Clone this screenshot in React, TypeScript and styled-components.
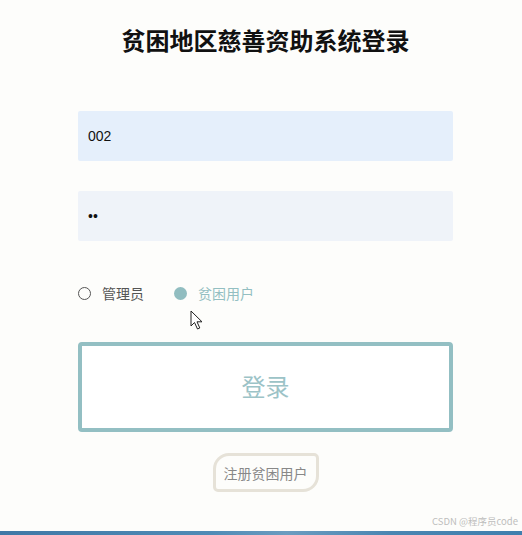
import React, { useState } from "react";
import styled, { createGlobalStyle } from "styled-components";

const GlobalStyle = createGlobalStyle`
    html, body {
        margin: 0;
        padding: 0;
        background: #fdfdfb;
        font-family: "Microsoft YaHei", "Noto Sans CJK SC", "Liberation Sans", sans-serif;
    }
`
const Page = styled.div`
    position: relative;
    width: 522px;
    height: 535px;
    overflow: hidden;
    display: flex;
    flex-direction: column;
`
const Title = styled.h1`
    margin: 25px 0 0 0;
    padding-left: 9px;
    text-align: center;
    font-size: 24px;
    font-weight: 700;
    line-height: 30px;
    color: #111;
`
const Form = styled.div`
    display: flex;
    flex-direction: column;
    width: 375px;
    margin: 56px 0 0 78px;
`
const Input = styled.input<{ $bg: string }>`
    box-sizing: border-box;
    width: 100%;
    height: 50px;
    border: none;
    outline: none;
    border-radius: 2px;
    padding: 0 10px;
    background: ${p => p.$bg};
    font-family: "Liberation Sans", Arial, sans-serif;
    font-size: 14px;
    color: #111;
    & + & {
        margin-top: 30px;
    }
`
const RadioRow = styled.div`
    display: flex;
    align-items: center;
    gap: 30px;
    margin-top: 40px;
    height: 24px;
`
const RadioItem = styled.label<{ $active?: boolean }>`
    display: flex;
    align-items: center;
    gap: 11px;
    font-size: 14px;
    color: ${p => (p.$active ? "#93bfc2" : "#555")};
    cursor: pointer;
`
const Dot = styled.span<{ $active?: boolean }>`
    box-sizing: border-box;
    width: 13px;
    height: 13px;
    border-radius: 50%;
    border: ${p => (p.$active ? "none" : "1px solid #555")};
    background: ${p => (p.$active ? "#91bdc0" : "transparent")};
`
const LoginButton = styled.button`
    box-sizing: border-box;
    margin-top: 37px;
    width: 100%;
    height: 90px;
    border: 4px solid #93bfc3;
    border-radius: 4px;
    background: #fff;
    color: #9cc3c7;
    font-size: 24px;
    line-height: 24px;
    padding-bottom: 4px;
    font-family: inherit;
    cursor: pointer;
`
const RegisterButton = styled.button`
    box-sizing: border-box;
    align-self: center;
    margin-top: 21px;
    width: 106px;
    height: 39px;
    padding: 0;
    border: 3px solid #e6e2d8;
    border-radius: 16px 5px 16px 5px;
    background: transparent;
    color: #888;
    font-size: 14px;
    font-family: inherit;
    cursor: pointer;
`
const Watermark = styled.div`
    position: absolute;
    right: 4px;
    bottom: 7px;
    font-size: 9.5px;
    color: #bdbdbd;
`
const Band = styled.div`
    position: absolute;
    left: 0;
    right: 0;
    bottom: 0;
    height: 4px;
    background: linear-gradient(90deg, #3f78a6, #4f8bb6 40%, #6b9cc0 55%, #4a86b2 75%, #3f7fae);
`
const Cursor = styled.svg`
    position: absolute;
    left: 190px;
    top: 310px;
`

const App = () => {
    const [role, setRole] = useState("user");
    return (
        <Page>
            <GlobalStyle />
            <Title>贫困地区慈善资助系统登录</Title>
            <Form>
                <Input $bg="#e5effb" defaultValue="002" />
                <Input $bg="#eff3f9" type="password" defaultValue="12" />
                <RadioRow>
                    <RadioItem onClick={() => setRole("admin")} $active={role === "admin"}>
                        <Dot $active={role === "admin"} />
                        管理员
                    </RadioItem>
                    <RadioItem onClick={() => setRole("user")} $active={role === "user"}>
                        <Dot $active={role === "user"} />
                        贫困用户
                    </RadioItem>
                </RadioRow>
                <LoginButton>登录</LoginButton>
                <RegisterButton>注册贫困用户</RegisterButton>
            </Form>
            <Cursor width="14" height="21" viewBox="0 0 14 21">
                <path d="M1 1 L1 16 L4.5 12.5 L7.5 19 L9.8 18 L7 11.8 L12 11.8 Z" fill="#fff" stroke="#222" strokeWidth="1" strokeLinejoin="round" />
            </Cursor>
            <Watermark>CSDN @程序员code</Watermark>
            <Band />
        </Page>
    )
}

export default App;
